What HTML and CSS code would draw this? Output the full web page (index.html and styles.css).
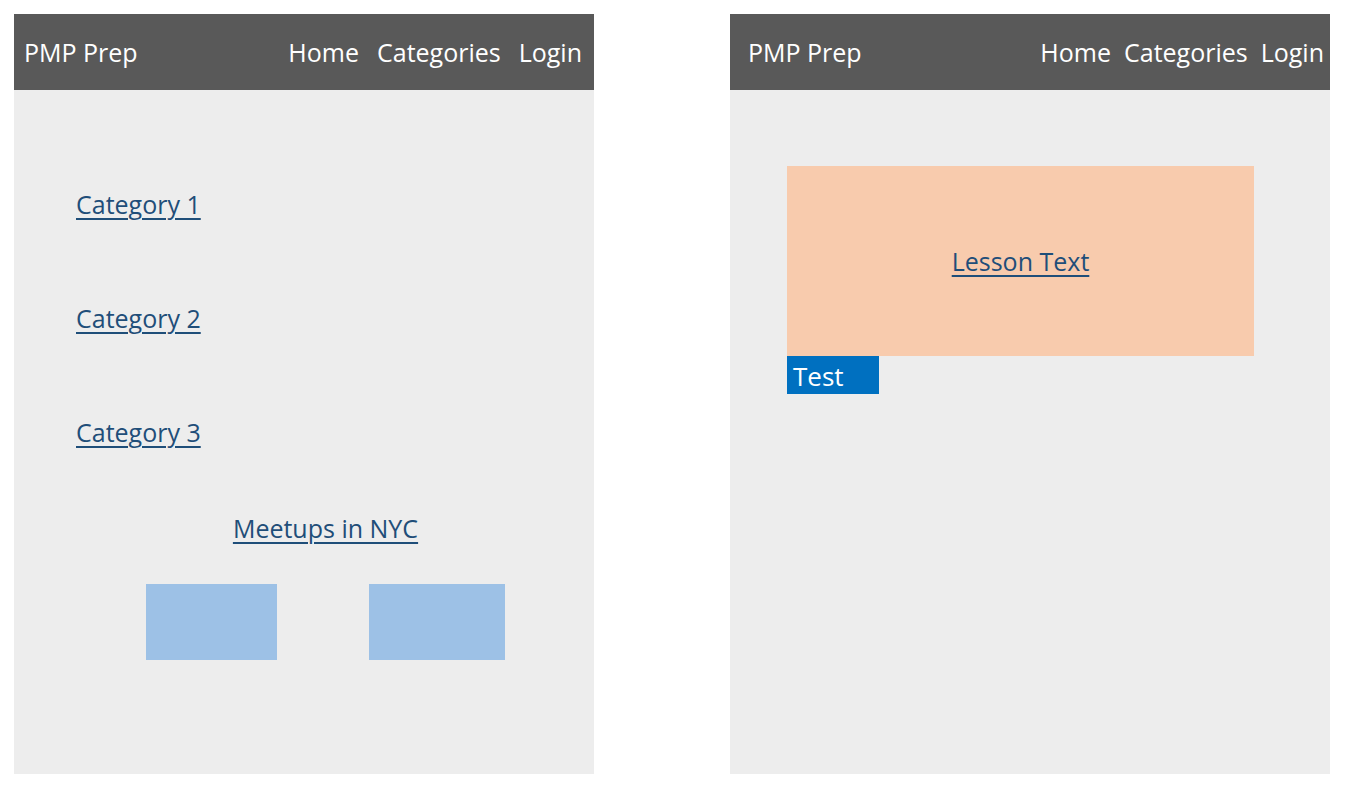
FILE: index.html
```html
<!DOCTYPE html>
<html>
<head>
<meta charset="utf-8">
<link rel="stylesheet" href="styles.css">
</head>
<body>
<div class="page">
  <div class="panel panel-left">
    <div class="header header-left">
      <span class="brand">PMP Prep</span>
      <nav class="nav nav-left"><span>Home</span><span>Categories</span><span>Login</span></nav>
    </div>
    <div class="content-left">
      <ul class="cats">
        <li><a href="#">Category 1</a></li>
        <li><a href="#">Category 2</a></li>
        <li><a href="#">Category 3</a></li>
      </ul>
      <div class="meetups">
        <a href="#" class="meetups-title">Meetups in NYC</a>
        <div class="boxes">
          <div class="box box-a"></div>
          <div class="box box-b"></div>
        </div>
      </div>
    </div>
  </div>
  <div class="panel panel-right">
    <div class="header header-right">
      <span class="brand">PMP Prep</span>
      <nav class="nav nav-right"><span>Home</span><span>Categories</span><span>Login</span></nav>
    </div>
    <div class="content-right">
      <div class="lesson"><a href="#">Lesson Text</a></div>
      <div class="test-btn">Test</div>
    </div>
  </div>
</div>
</body>
</html>
```

FILE: styles.css
```css
* { box-sizing: border-box; }
html, body { margin: 0; padding: 0; background: #ffffff; }
body {
  font-family: "Open Sans", "Noto Sans", sans-serif;
  font-size: 25px;
}
.page {
  display: flex;
  gap: 136px;
  padding: 14px;
}
.panel {
  background: #ededed;
  height: 760px;
  display: flex;
  flex-direction: column;
}
.panel-left { width: 580px; }
.panel-right { width: 600px; }
.header {
  height: 76px;
  background: #595959;
  color: #ffffff;
  display: flex;
  align-items: center;
  justify-content: space-between;
  line-height: 1;
}
.header-left { padding: 0 12px 0 10px; }
.header-right { padding: 0 6px 0 18px; }
.nav { display: flex; }
.nav-left { gap: 18px; }
.nav-right { gap: 13px; }
a { color: #1f4e79; text-decoration: underline; text-decoration-thickness: 2px; text-underline-offset: 4px; }
.content-left { padding-top: 96px; }
.cats { list-style: none; margin: 0; padding: 0 0 0 62px; display: flex; flex-direction: column; gap: 78px; }
.cats li { line-height: 36px; height: 36px; }
.meetups {
  margin: 60px 0 0 132px;
  width: 359px;
  display: flex;
  flex-direction: column;
  align-items: center;
}
.meetups-title { line-height: 36px; display: block; }
.boxes { display: flex; gap: 92px; margin-top: 38px; width: 100%; }
.box { height: 76px; background: #9dc1e6; }
.box-a { width: 131px; }
.box-b { width: 136px; }
.content-right { padding: 76px 0 0 57px; }
.lesson {
  width: 467px;
  height: 190px;
  background: #f8cbad;
  display: flex;
  align-items: center;
  justify-content: center;
}
.test-btn {
  width: 92px;
  height: 38px;
  background: #0070c0;
  color: #ffffff;
  font-size: 26px;
  line-height: 41px;
  padding-left: 6px;
}
```
